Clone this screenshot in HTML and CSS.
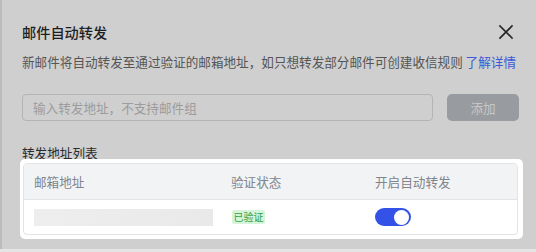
FILE: index.html
```html
<!DOCTYPE html>
<html lang="zh">
<head>
<meta charset="utf-8">
<title>邮件自动转发</title>
<link rel="stylesheet" href="styles.css">
</head>
<body>
<div class="modal">
  <div class="head">
    <h1 class="title">邮件自动转发</h1>
    <button class="close" aria-label="关闭">
      <svg width="16" height="16" viewBox="0 0 16 16"><path d="M2 2L14 14M14 2L2 14" stroke="#262626" stroke-width="1.7" fill="none" stroke-linecap="square"/></svg>
    </button>
  </div>
  <p class="desc">新邮件将自动转发至通过验证的邮箱地址，如只想转发部分邮件可创建收信规则 <a class="link">了解详情</a></p>
  <div class="form">
    <div class="input">输入转发地址，不支持邮件组</div>
    <button class="add">添加</button>
  </div>
  <div class="label">转发地址列表</div>
  <div class="spot">
    <div class="table">
      <div class="tr th">
        <div class="cell">邮箱地址</div>
        <div class="cell">验证状态</div>
        <div class="cell">开启自动转发</div>
      </div>
      <div class="tr td">
        <div class="cell"><span class="skeleton"></span></div>
        <div class="cell"><span class="badge">已验证</span></div>
        <div class="cell"><span class="switch"><span class="knob"></span></span></div>
      </div>
    </div>
  </div>
</div>
</body>
</html>
```
FILE: styles.css
```css
* { box-sizing: border-box; }
body {
  margin: 0;
  background: #e5e5e5;
  font-family: "Noto Sans CJK SC", "Noto Sans", sans-serif;
}
.modal {
  width: 536px;
  height: 249px;
  background: #cfcfcf;
  border-left: 2px solid #bcbcbc;
  padding: 22px 0 0 20px;
}
.head {
  display: flex;
  justify-content: space-between;
  align-items: center;
  height: 20px;
  margin-right: 22px;
}
.title {
  margin: 0;
  font-size: 14.2px;
  line-height: 20px;
  font-weight: 500;
  color: #1e1e1e;
}
.close {
  width: 16px;
  height: 16px;
  padding: 0;
  border: 0;
  background: none;
  display: flex;
}
.desc {
  margin: 10.5px 0 0;
  font-size: 12.6px;
  line-height: 18px;
  color: #555555;
  white-space: nowrap;
}
.link { color: #3a5bdb; }
.form {
  display: flex;
  gap: 14px;
  margin-top: 23.5px;
}
.input {
  width: 411px;
  height: 27px;
  border: 1px solid #b4b4b4;
  border-radius: 4px;
  padding-left: 10px;
  font-size: 12.6px;
  line-height: 25px;
  color: #9c9c9c;
}
.add {
  width: 72px;
  height: 27px;
  border: 0;
  border-radius: 5px;
  background: #989b9f;
  color: #c6c8cb;
  font-family: inherit;
  font-size: 12.6px;
  padding: 0;
}
.label {
  margin-top: 23px;
  font-size: 12.6px;
  line-height: 18px;
  color: #2a2a2a;
}
.spot {
  position: relative;
  margin: -3px 0 0 -2px;
  width: 503px;
  padding: 4px 5px 4px 3px;
  background: #ffffff;
  border-radius: 5px;
}
.table {
  border: 1px solid #e3e4e8;
  border-radius: 4px;
  overflow: hidden;
}
.tr {
  display: grid;
  grid-template-columns: 197px 144px 1fr;
  align-items: center;
}
.th {
  height: 36px;
  background: #f2f3f5;
  border-bottom: 1px solid #e3e4e8;
  font-size: 12.6px;
  color: #80848b;
}
.td { height: 34px; }
.cell {
  padding-left: 10px;
  display: flex;
  align-items: center;
}
.skeleton {
  display: block;
  width: 179px;
  height: 17px;
  background: linear-gradient(90deg, #eeeeee, #e9e9e9);
}
.badge {
  display: block;
  margin-left: 1px;
  width: 33px;
  height: 14px;
  border-radius: 2px;
  background: #d6f4da;
  color: #2f9f48;
  font-size: 10px;
  line-height: 14px;
  text-align: center;
}
.switch {
  display: flex;
  justify-content: flex-end;
  align-items: center;
  width: 36px;
  height: 18px;
  padding: 2px;
  border-radius: 9px;
  background: #3552e8;
}
.knob {
  width: 15px;
  height: 15px;
  border-radius: 50%;
  background: #ffffff;
}
```
